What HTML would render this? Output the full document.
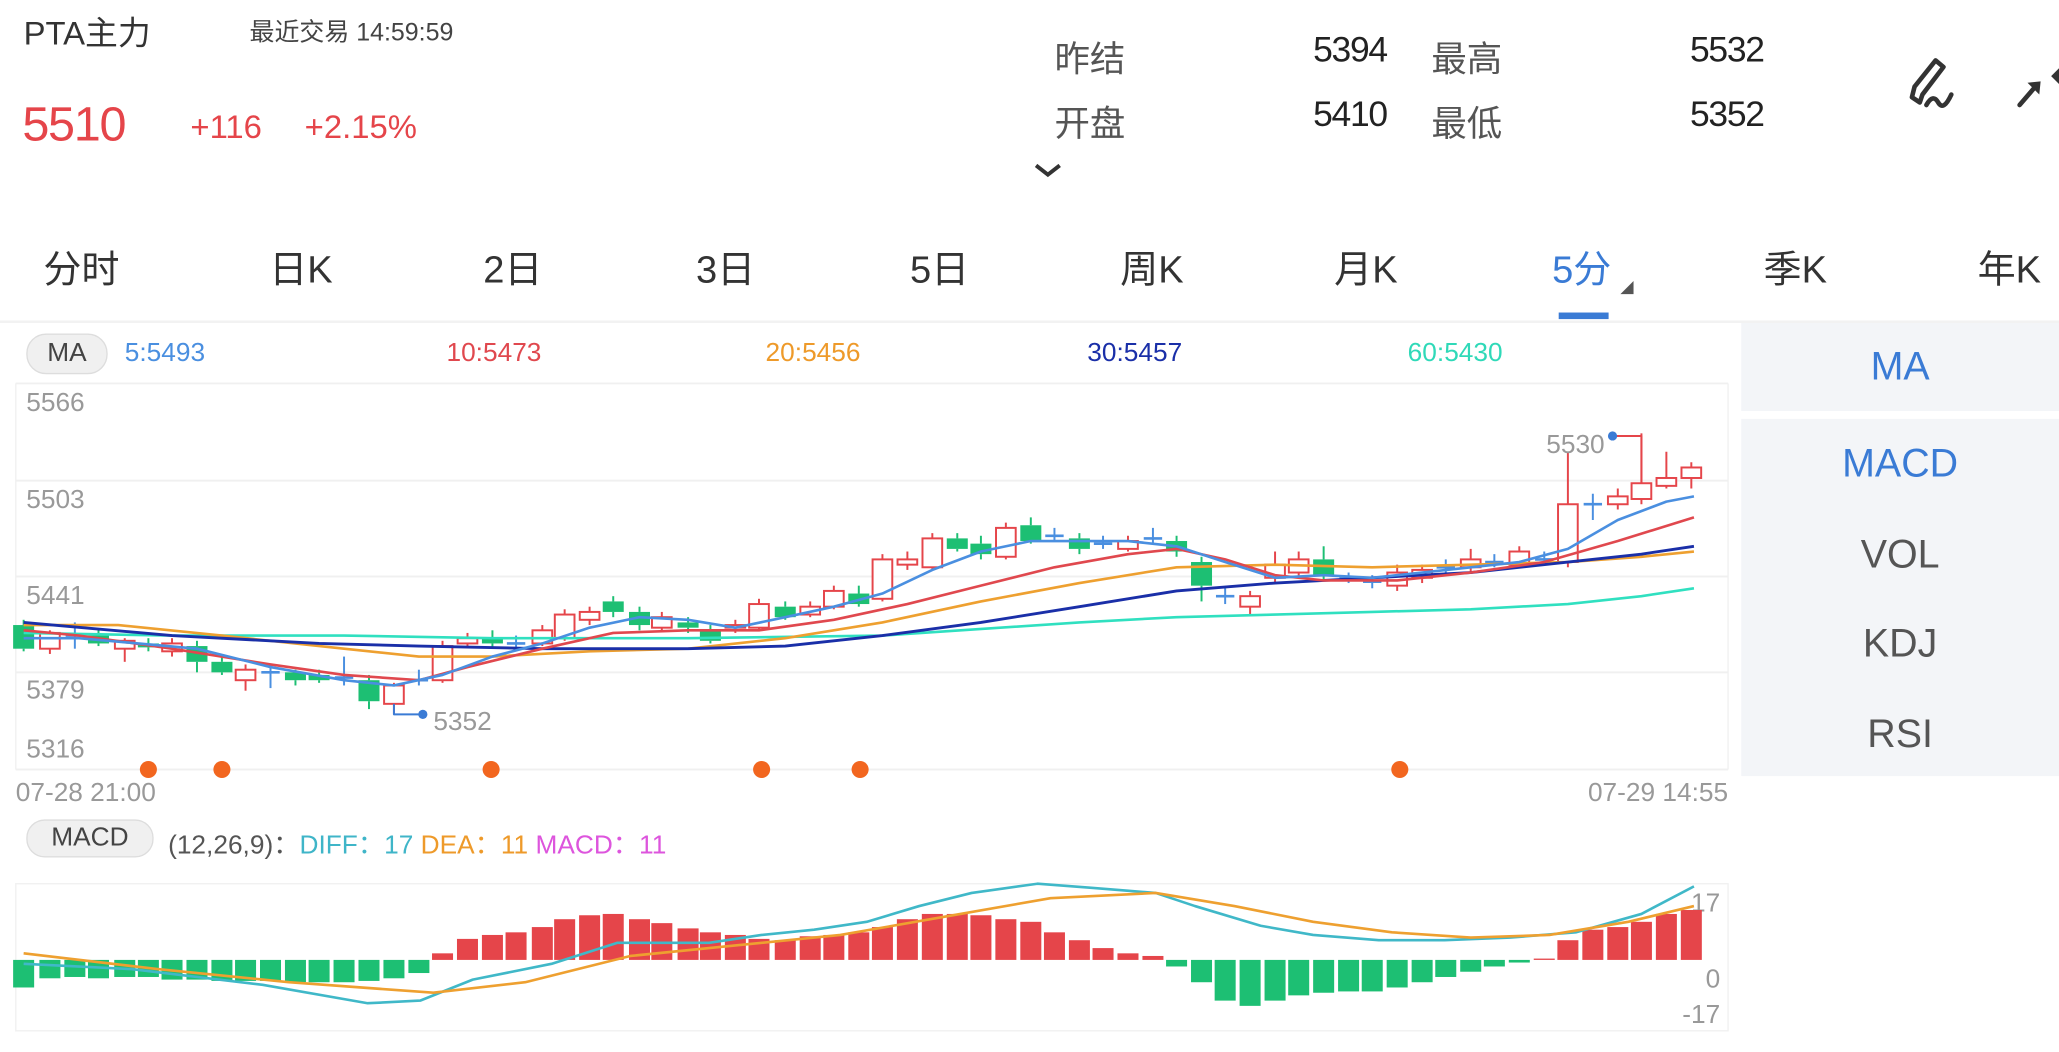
<!DOCTYPE html>
<html><head><meta charset="utf-8">
<style>
html,body{margin:0;padding:0;background:#fff;overflow:hidden;width:2059px;height:1051px}
#w{position:absolute;left:0;top:0;width:1568px;height:801px;transform:scale(1.31314);transform-origin:0 0;font-family:"Liberation Sans","Noto Sans CJK SC",sans-serif;color:#333}
.a{position:absolute;white-space:nowrap}
.tab{position:absolute;top:182px;font-size:29px;color:#333}
.side{position:absolute;left:1326px;width:242px;background:#f3f5f8}
.side div{position:absolute;left:0;width:242px;text-align:center;font-size:30px;color:#555}
</style></head><body><div id="w">
<div class="a" style="left:18px;top:6px;font-size:25px;color:#333">PTA主力</div>
<div class="a" style="left:190px;top:10px;font-size:19px;color:#444">最近交易 14:59:59</div>
<div class="a" style="left:17px;top:74px;font-size:37px;color:#e5454a;letter-spacing:-1px">5510</div>
<div class="a" style="left:145px;top:83px;font-size:25px;color:#e5454a">+116</div>
<div class="a" style="left:232px;top:83px;font-size:25px;color:#e5454a">+2.15%</div>
<div class="a" style="left:803px;top:23px;font-size:27px;color:#555">昨结</div>
<div class="a" style="left:1000px;top:23px;font-size:27px;color:#222;letter-spacing:-1px">5394</div>
<div class="a" style="left:1090px;top:23px;font-size:27px;color:#555">最高</div>
<div class="a" style="left:1287px;top:23px;font-size:27px;color:#222;letter-spacing:-1px">5532</div>
<div class="a" style="left:803px;top:72px;font-size:27px;color:#555">开盘</div>
<div class="a" style="left:1000px;top:72px;font-size:27px;color:#222;letter-spacing:-1px">5410</div>
<div class="a" style="left:1090px;top:72px;font-size:27px;color:#555">最低</div>
<div class="a" style="left:1287px;top:72px;font-size:27px;color:#222;letter-spacing:-1px">5352</div>
<svg class="a" style="left:786px;top:122px" width="26" height="16"><path d="M3 4 L12 11 L21 4" fill="none" stroke="#333" stroke-width="3"/></svg>
<svg class="a" style="left:1450px;top:38px" width="118" height="50">
<path d="M12 40 L6 36 L8 28 L24 8 L30 13 L14 34 Z" fill="none" stroke="#333" stroke-width="3.5" stroke-linejoin="round"/>
<path d="M17 42 Q22 33 26 40 T36 34" fill="none" stroke="#333" stroke-width="3.5" stroke-linecap="round"/>
<path d="M88 42 L100 28" stroke="#333" stroke-width="3.5" stroke-linecap="round"/>
<path d="M94 25 L104 24 L103 34 Z" fill="#333"/>
<path d="M112 20 L118 14 L118 26 Z" fill="#333"/>
</svg>
<div class="tab" style="left:33px">分时</div>
<div class="tab" style="left:205px">日K</div>
<div class="tab" style="left:368px">2日</div>
<div class="tab" style="left:530px">3日</div>
<div class="tab" style="left:693px">5日</div>
<div class="tab" style="left:853px">周K</div>
<div class="tab" style="left:1016px">月K</div>
<div class="tab" style="left:1182px;color:#3a7bd5">5分</div>
<div class="tab" style="left:1343px">季K</div>
<div class="tab" style="left:1506px">年K</div>
<svg class="a" style="left:1234px;top:214px" width="12" height="12"><path d="M10 0 L10 10 L0 10 Z" fill="#555"/></svg>
<div class="a" style="left:1187px;top:238px;width:38px;height:5px;background:#3a7bd5"></div>
<div class="a" style="left:0;top:244px;width:1568px;height:2px;background:#f2f2f2"></div>
<div class="side" style="top:246px;height:67px"><div style="top:17px;color:#3a7bd5">MA</div></div>
<div class="side" style="top:319px;height:272px"><div style="top:18px;color:#3a7bd5">MACD</div><div style="top:87px">VOL</div><div style="top:155px">KDJ</div><div style="top:224px">RSI</div></div>
<div class="a" style="left:20px;top:254px;width:60px;height:29px;border:1px solid #ddd;border-radius:15px;background:#f0f0f0;text-align:center;font-size:20px;line-height:29px;color:#444">MA</div>
<div class="a" style="left:95px;top:258px;font-size:20px;color:#4a8fe0">5:5493</div>
<div class="a" style="left:340px;top:258px;font-size:20px;color:#e0484e">10:5473</div>
<div class="a" style="left:583px;top:258px;font-size:20px;color:#ee9a2a">20:5456</div>
<div class="a" style="left:828px;top:258px;font-size:20px;color:#1a2fa8">30:5457</div>
<div class="a" style="left:1072px;top:258px;font-size:20px;color:#2fd9b8">60:5430</div>
<div class="a" style="left:20px;top:624px;width:95px;height:27px;border:1px solid #ddd;border-radius:14px;background:#f0f0f0;text-align:center;font-size:20px;line-height:27px;color:#444">MACD</div>
<div class="a" style="left:128px;top:627px;font-size:20px;color:#555">(12,26,9)：<span style="color:#3fb5c8">DIFF：17</span> <span style="color:#ee9a2a">DEA：11</span> <span style="color:#dd55dd">MACD：11</span></div>
<svg id="c" class="a" style="left:0;top:0" width="1326" height="801"></svg>
</div>
<script>
var s=document.getElementById('c'),h='';
function L(x1,y1,x2,y2,c,w){h+='<line x1="'+x1+'" y1="'+y1+'" x2="'+x2+'" y2="'+y2+'" stroke="'+c+'" stroke-width="'+(w||1)+'"/>';}
function T(x,y,t,a){h+='<text x="'+x+'" y="'+y+'" font-size="20" fill="#999" font-family="Liberation Sans,sans-serif"'+(a?' text-anchor="end"':'')+'>'+t+'</text>';}
[292,366,439,512,586].forEach(function(y){L(12,y,1316,y,'#f0f0f0',1.5);});
L(12,292,12,586,'#f0f0f0');L(1316,292,1316,586,'#f0f0f0');
h+='<rect x="12" y="673" width="1304" height="112" fill="none" stroke="#f0f0f0"/>';
T(20,313,'5566');T(20,387,'5503');T(20,460,'5441');T(20,532,'5379');T(20,577,'5316');
T(12,610,'07-28 21:00');T(1316,610,'07-29 14:55',1);
T(1310,694,'17',1);T(1310,752,'0',1);T(1310,779,'-17',1);
// candles: x, type(r/g/c), top, bot, wickTop, wickBot
var C=[[18,'g',476,494,472,496],[38,'r',482,494,480,498],[57,'c',484,484,474,494],[75,'g',484,490,480,492],[95,'r',488,494,486,504],[113,'g',490,493,486,496],[131,'r',490,496,486,500],[150,'g',492,504,488,512],[169,'g',504,512,500,514],[187,'r',510,518,506,526],[206,'c',512,512,506,524],[225,'g',512,518,510,522],[243,'g',514,518,510,520],[262,'c',516,516,500,522],[281,'g',518,534,514,540],[300,'r',522,536,520,544],[319,'c',518,518,510,522],[337,'r',492,518,488,520],[356,'r',486,490,482,492],[375,'g',486,490,480,494],[393,'c',490,490,484,494],[413,'r',480,490,476,492],[430,'r',468,486,464,488],[449,'r',466,472,462,476],[467,'g',458,466,454,470],[487,'g',466,476,462,480],[504,'r',470,478,466,480],[524,'g',474,478,470,482],[541,'g',480,488,476,490],[560,'r',476,478,472,482],[578,'r',460,478,456,480],[598,'g',462,470,458,472],[617,'r',462,468,458,470],[635,'r',450,462,446,464],[654,'g',452,460,446,462],[672,'r',426,456,422,458],[691,'r',426,430,420,434],[710,'r',410,432,406,434],[729,'g',410,418,406,420],[747,'g',414,422,408,426],[766,'r',402,424,398,426],[785,'g',400,412,394,414],[803,'c',408,408,402,412],[822,'g',410,418,406,422],[840,'c',414,414,408,418],[859,'r',412,418,408,420],[878,'c',410,410,402,414],[896,'g',412,420,408,424],[915,'g',428,446,424,458],[933,'c',454,454,448,460],[952,'r',454,462,450,468],[971,'r',430,440,420,444],[989,'r',426,436,420,440],[1008,'g',426,438,416,442],[1027,'c',440,440,436,444],[1045,'c',443,443,438,448],[1064,'r',436,446,430,450],[1083,'r',434,440,430,444],[1101,'c',432,432,426,436],[1120,'r',426,432,418,436],[1138,'c',428,428,422,432],[1157,'r',420,430,416,432],[1176,'c',426,426,420,430],[1194,'r',384,428,344,432],[1213,'c',384,384,376,396],[1232,'r',378,384,372,388],[1250,'r',368,380,330,384],[1269,'r',364,370,344,372],[1288,'r',356,364,352,372]];
function P(pts,c,w){var d='';for(var i=0;i<pts.length;i+=2)d+=(i?'L':'M')+pts[i]+' '+pts[i+1];h+='<path d="'+d+'" fill="none" stroke="'+c+'" stroke-width="'+w+'" stroke-linejoin="round"/>';}
var G='#1dbf73',R='#e5454a';
C.forEach(function(k){var x=k[0],c=k[1]=='g'?G:(k[1]=='r'?R:'#4a8fe0');
if(k[1]=='c'){L(x,k[4],x,k[5],'#4a8fe0',1.5);L(x-7,k[2],x+7,k[2],'#4a8fe0',2);return;}
L(x,k[4],x,k[2],c,1.5);L(x,k[3],x,k[5],c,1.5);
if(k[1]=='g')h+='<rect x="'+(x-8)+'" y="'+k[2]+'" width="16" height="'+Math.max(2,k[3]-k[2])+'" fill="'+G+'"/>';
else h+='<rect x="'+(x-7.5)+'" y="'+k[2]+'" width="15" height="'+Math.max(2,k[3]-k[2])+'" fill="#fff" stroke="'+R+'" stroke-width="1.5"/>';});
P([18,482,131,484,262,484,375,486,524,486,672,484,822,474,896,470,971,468,1045,466,1120,464,1194,460,1250,454,1290,448],'#30e0c0',2);
P([18,476,90,476,169,484,262,494,319,500,375,500,449,496,524,494,598,486,672,474,747,458,822,444,896,432,971,430,1045,432,1120,430,1194,428,1250,424,1290,420],'#eea030',2);
P([18,474,131,484,243,490,319,492,413,494,524,494,598,492,672,484,747,474,822,462,896,450,971,444,1045,440,1120,436,1194,428,1250,422,1290,416],'#1a2fa8',2.2);
P([18,480,60,484,131,494,206,506,262,514,319,518,356,508,413,494,467,482,524,480,578,480,635,472,691,460,747,446,803,432,859,422,896,418,933,426,971,438,1008,442,1064,442,1120,436,1176,428,1232,412,1290,394],'#e0484e',2);
P([18,486,60,486,150,494,206,508,262,518,300,522,337,514,375,500,413,490,449,478,487,470,524,472,560,478,598,470,635,462,672,452,710,434,747,420,785,412,822,412,859,412,896,416,933,428,971,440,1008,438,1045,440,1083,436,1120,432,1157,428,1194,418,1232,396,1269,382,1290,378],'#4a8fe0',2);
P([300,536,300,544,322,544],'#3a7bd5',1.5);h+='<circle cx="322" cy="544" r="3.5" fill="#3a7bd5"/>';T(330,556,'5352');
P([1250,368,1250,332,1228,332],'#e5454a',1.5);h+='<circle cx="1228" cy="332" r="3.5" fill="#3a7bd5"/>';T(1222,345,'5530',1);
[113,169,374,580,655,1066].forEach(function(x){h+='<circle cx="'+x+'" cy="586" r="6.5" fill="#f2661f"/>';});
var M=[752,745,744,745,744,744,746,746,747,747,747,748,748,748,747,745,741,726,715,712,710,706,700,697,696,700,703,707,710,712,715,716,713,712,710,706,700,696,696,697,700,702,710,716,722,726,728,736,748,762,766,762,758,756,755,755,752,748,744,740,736,733,730,716,708,706,702,696,693];
C.forEach(function(k,i){var v=M[i],x=k[0];if(v==null)return;if(v>731)h+='<rect x="'+(x-8)+'" y="731" width="16" height="'+(v-731)+'" fill="'+G+'"/>';else h+='<rect x="'+(x-8)+'" y="'+v+'" width="16" height="'+(731-v)+'" fill="'+R+'"/>';});
P([18,734,100,738,200,750,280,764,320,762,360,746,420,734,470,718,540,718,580,712,620,708,660,702,700,690,740,680,790,673,830,676,880,680,910,690,960,705,1000,712,1050,716,1100,716,1150,714,1200,710,1250,696,1290,675],'#40b8c8',2);
P([18,726,120,738,220,748,330,756,400,748,480,728,560,720,640,712,720,698,800,684,880,680,940,690,1000,702,1060,710,1120,714,1180,712,1240,702,1290,690],'#eea030',2);
s.innerHTML=h;
</script>
</body></html>
